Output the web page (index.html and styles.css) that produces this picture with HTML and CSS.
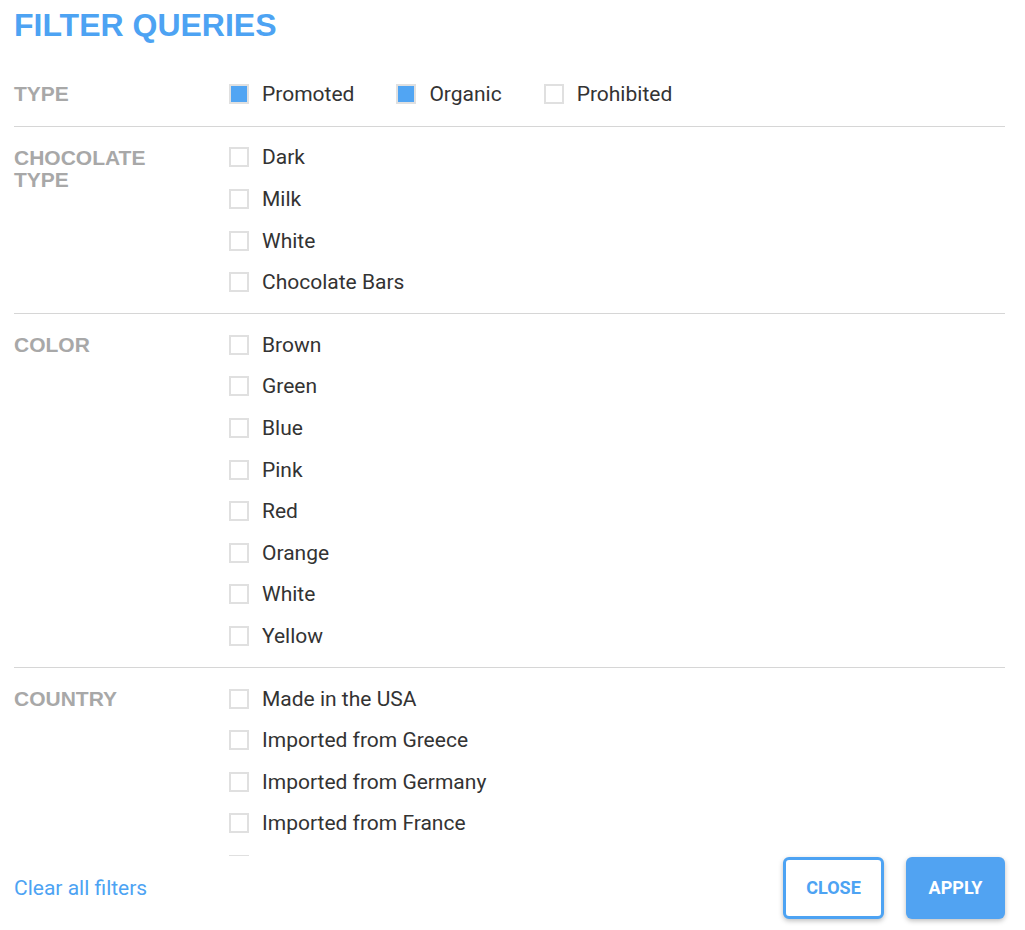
FILE: index.html
```html
<!DOCTYPE html>
<html lang="en">
<head>
  <meta charset="UTF-8">
  <meta name="viewport" content="width=device-width, initial-scale=1.0">
  <title>Filter Queries</title>
  <link rel="stylesheet" href="styles.css">
</head>
<body>
  <div class="filters">
    <h1 class="title">FILTER QUERIES</h1>

    <div class="section">
      <div class="section-label">TYPE</div>
      <div class="options inline">
        <label class="option"><span class="box checked"></span>Promoted</label>
        <label class="option"><span class="box checked"></span>Organic</label>
        <label class="option"><span class="box"></span>Prohibited</label>
      </div>
    </div>

    <div class="section">
      <div class="section-label">CHOCOLATE<br>TYPE</div>
      <div class="options">
        <label class="option"><span class="box"></span>Dark</label>
        <label class="option"><span class="box"></span>Milk</label>
        <label class="option"><span class="box"></span>White</label>
        <label class="option"><span class="box"></span>Chocolate Bars</label>
      </div>
    </div>

    <div class="section">
      <div class="section-label">COLOR</div>
      <div class="options">
        <label class="option"><span class="box"></span>Brown</label>
        <label class="option"><span class="box"></span>Green</label>
        <label class="option"><span class="box"></span>Blue</label>
        <label class="option"><span class="box"></span>Pink</label>
        <label class="option"><span class="box"></span>Red</label>
        <label class="option"><span class="box"></span>Orange</label>
        <label class="option"><span class="box"></span>White</label>
        <label class="option"><span class="box"></span>Yellow</label>
      </div>
    </div>

    <div class="section last">
      <div class="section-label">COUNTRY</div>
      <div class="options">
        <label class="option"><span class="box"></span>Made in the USA</label>
        <label class="option"><span class="box"></span>Imported from Greece</label>
        <label class="option"><span class="box"></span>Imported from Germany</label>
        <label class="option"><span class="box"></span>Imported from France</label>
        <label class="option"><span class="box"></span>Imported from Italy</label>
        <label class="option"><span class="box"></span>Imported from Belgium</label>
      </div>
    </div>
  </div>

  <div class="footer">
    <a class="clear-link" href="#">Clear all filters</a>
    <div class="actions">
      <button class="btn btn-close">CLOSE</button>
      <button class="btn btn-apply">APPLY</button>
    </div>
  </div>
</body>
</html>
```

FILE: styles.css
```css
* {
  margin: 0;
  padding: 0;
  box-sizing: border-box;
}

body {
  font-family: 'Roboto', 'Liberation Sans', sans-serif;
  background: #fff;
  color: #333;
  height: 100vh;
  display: flex;
  flex-direction: column;
  overflow: hidden;
}

.filters {
  flex: 1;
  overflow-y: auto;
  scrollbar-width: none;
  padding: 0 20px 0 14px;
}

.title {
  font-family: 'Liberation Sans', Arial, sans-serif;
  font-size: 32px;
  font-weight: bold;
  line-height: 40px;
  color: #4da3f3;
  margin-top: 5px;
  margin-bottom: 18px;
}

.section {
  display: flex;
  padding: 10px 0;
  border-bottom: 1px solid #d6d6d6;
}

.title + .section {
  padding-bottom: 11px;
}

.section.last {
  border-bottom: none;
}

.section-label {
  width: 215px;
  flex-shrink: 0;
  padding-top: 10px;
  font-family: 'Liberation Sans', Arial, sans-serif;
  font-size: 21px;
  font-weight: bold;
  line-height: 22px;
  color: #a8a8a8;
}

.options {
  display: flex;
  flex-direction: column;
}

.options.inline {
  flex-direction: row;
  gap: 42px;
}

.option {
  display: flex;
  align-items: center;
  height: 41.6px;
  font-size: 21px;
  color: #333;
  cursor: pointer;
}

.box {
  width: 20px;
  height: 20px;
  border: 2px solid #e0e0e0;
  background: #fff;
  margin-right: 13px;
  flex-shrink: 0;
}

.box.checked {
  background: #51a5f3;
}

.footer {
  height: 74px;
  display: flex;
  align-items: center;
  justify-content: space-between;
  padding: 0 20px 11px 14px;
}

.clear-link {
  font-size: 21px;
  color: #4da3f3;
  text-decoration: none;
}

.actions {
  display: flex;
  gap: 22px;
}

.btn {
  font-family: 'Roboto', sans-serif;
  font-size: 18px;
  font-weight: bold;
  height: 62px;
  border-radius: 6px;
  cursor: pointer;
  box-shadow: 0 2px 5px rgba(0, 0, 0, 0.25);
}

.btn-close {
  width: 101px;
  background: #fff;
  color: #4da3f3;
  border: 3px solid #4da3f3;
}

.btn-apply {
  width: 99px;
  background: #51a3f2;
  color: #fff;
  border: none;
}
```
